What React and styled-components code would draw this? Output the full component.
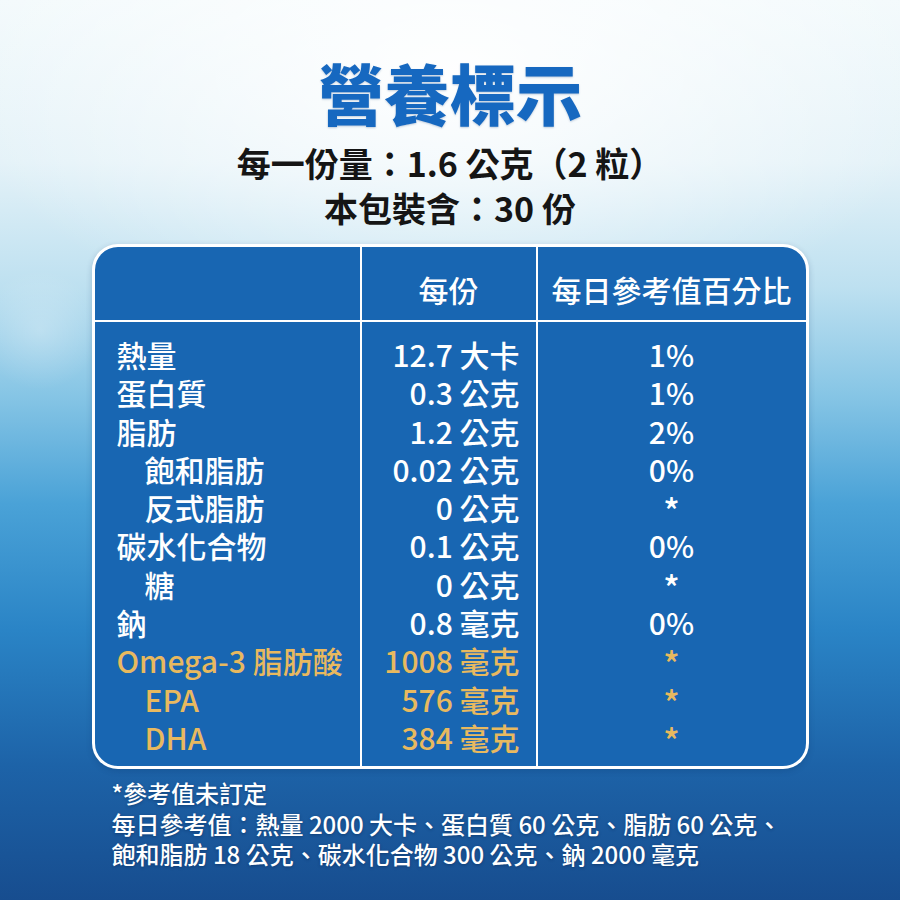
import React from "react";
import styled, { createGlobalStyle } from "styled-components";

const GlobalStyle = createGlobalStyle`
  body {
    margin: 0;
    font-family: "Noto Sans CJK TC", "Noto Sans", sans-serif;
  }
`;

const Page = styled.div`
  width: 900px;
  height: 900px;
  box-sizing: border-box;
  display: flex;
  flex-direction: column;
  align-items: center;
  overflow: hidden;
  background:
    radial-gradient(ellipse 55% 30% at 50% 8%, rgba(255, 255, 255, 0.95), rgba(255, 255, 255, 0) 100%),
    radial-gradient(circle 60px at 40px 330px, rgba(255, 255, 255, 0.25), rgba(255, 255, 255, 0) 100%),
    linear-gradient(
      180deg,
      #f3fafc 0%,
      #e4f2f8 18%,
      #bde0f0 32%,
      #86c5e5 44%,
      #4aa2d7 56%,
      #2a84c6 70%,
      #1d63a8 85%,
      #174d8f 100%
    );
`;

const Title = styled.h1`
  margin: 46px 0 0;
  font-size: 66px;
  line-height: 90px;
  font-weight: 900;
  color: #1668c0;
  text-shadow: 0 1px 2px rgba(10, 60, 120, 0.25);
`;

const Serving = styled.div`
  margin-top: 4px;
  text-align: center;
  font-size: 34px;
  line-height: 45px;
  font-weight: 700;
  color: #151515;
`;

const Card = styled.div`
  margin-top: 14px;
  width: 717px;
  box-sizing: border-box;
  border: 3px solid #ffffff;
  border-radius: 26px;
  background: #1866b2;
  overflow: hidden;
  display: grid;
  grid-template-columns: 267px 176px 1fr;
  grid-template-rows: 75px auto;
  color: #ffffff;
  box-shadow: 0 2px 6px rgba(0, 40, 90, 0.2);
`;

const HeadCell = styled.div`
  display: flex;
  align-items: flex-end;
  justify-content: center;
  padding-bottom: 13px;
  font-size: 30px;
  line-height: 36px;
  font-weight: 500;
  border-bottom: 2px solid #ffffff;
  border-right: ${(p) => (p.last ? "none" : "2px solid #ffffff")};
`;

const Column = styled.div`
  padding: 13px 0 10px;
  border-right: ${(p) => (p.last ? "none" : "2px solid #ffffff")};
  display: flex;
  flex-direction: column;
  align-items: ${(p) => p.align || "flex-start"};
`;

const Line = styled.div`
  font-size: 30px;
  line-height: 38.3px;
  height: 38.3px;
  font-weight: 500;
  white-space: nowrap;
  color: ${(p) => (p.gold ? "#e8b95f" : "#ffffff")};
`;

const Label = styled(Line)`
  padding-left: ${(p) => (p.sub ? "50px" : "22px")};
`;

const Value = styled(Line)`
  padding-right: 16px;
`;

const Pct = styled(Line)`
  font-size: ${(p) => (p.star ? "34px" : "30px")};
  line-height: ${(p) => (p.star ? "44px" : "38.3px")};
`;

const Notes = styled.div`
  width: 717px;
  box-sizing: border-box;
  padding: 9px 0 0 20px;
  font-size: 24px;
  line-height: 30.5px;
  font-weight: 500;
  color: #ffffff;
  text-shadow: 0 1px 3px rgba(0, 30, 70, 0.45);
`;

const rows = [
  { label: "熱量", value: "12.7 大卡", pct: "1%" },
  { label: "蛋白質", value: "0.3 公克", pct: "1%" },
  { label: "脂肪", value: "1.2 公克", pct: "2%" },
  { label: "飽和脂肪", value: "0.02 公克", pct: "0%", sub: true },
  { label: "反式脂肪", value: "0 公克", pct: "*", sub: true },
  { label: "碳水化合物", value: "0.1 公克", pct: "0%" },
  { label: "糖", value: "0 公克", pct: "*", sub: true },
  { label: "鈉", value: "0.8 毫克", pct: "0%" },
  { label: "Omega-3 脂肪酸", value: "1008 毫克", pct: "*", gold: true },
  { label: "EPA", value: "576 毫克", pct: "*", gold: true, sub: true },
  { label: "DHA", value: "384 毫克", pct: "*", gold: true, sub: true },
];

export default function App() {
  return (
    <>
      <GlobalStyle />
      <Page>
        <Title>營養標示</Title>
        <Serving>
          每一份量：1.6 公克（2 粒）
          <br />
          本包裝含：30 份
        </Serving>
        <Card>
          <HeadCell />
          <HeadCell>每份</HeadCell>
          <HeadCell last>每日參考值百分比</HeadCell>
          <Column>
            {rows.map((r) => (
              <Label key={r.label} sub={r.sub} gold={r.gold}>
                {r.label}
              </Label>
            ))}
          </Column>
          <Column align="flex-end">
            {rows.map((r) => (
              <Value key={r.label} gold={r.gold}>
                {r.value}
              </Value>
            ))}
          </Column>
          <Column last align="center">
            {rows.map((r) => (
              <Pct key={r.label} gold={r.gold} star={r.pct === "*"}>
                {r.pct}
              </Pct>
            ))}
          </Column>
        </Card>
        <Notes>
          *參考值未訂定
          <br />
          每日參考值：熱量 2000 大卡、蛋白質 60 公克、脂肪 60 公克、
          <br />
          飽和脂肪 18 公克、碳水化合物 300 公克、鈉 2000 毫克
        </Notes>
      </Page>
    </>
  );
}
